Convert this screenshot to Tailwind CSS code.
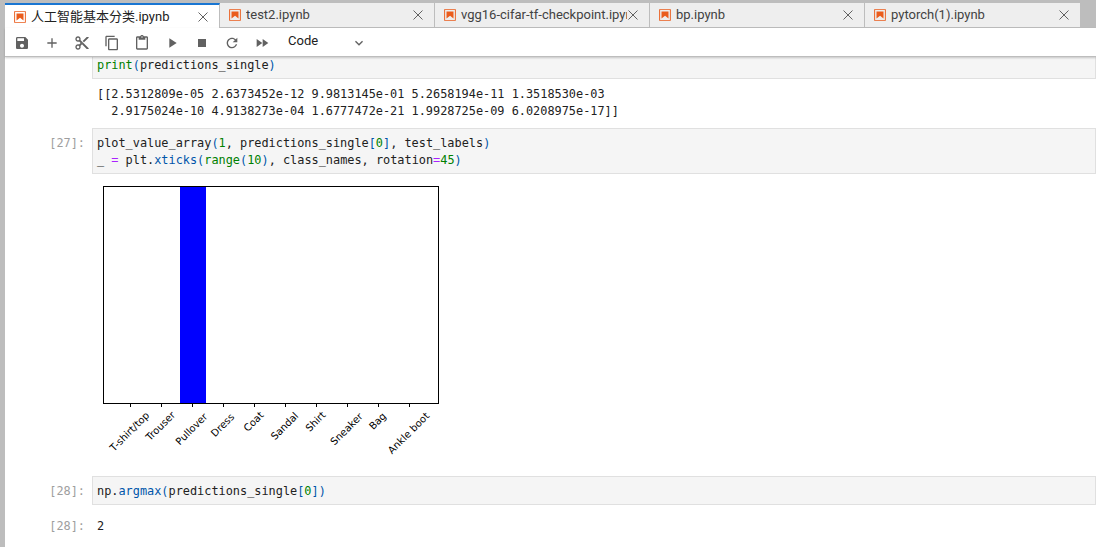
<!DOCTYPE html>
<html lang="zh">
<head>
    <meta charset="UTF-8">
    <title>人工智能基本分类.ipynb</title>
    <script src="https://cdn.jsdelivr.net/npm/@tailwindcss/browser@4"></script>
</head>
<body class="bg-white w-[1096px] h-[547px] overflow-hidden font-['Roboto','Noto_Sans_CJK_SC',sans-serif] text-[#424242]">
<div class="flex h-[547px]">
    <div class="w-[5px] bg-[#bdbdbd] shrink-0"></div>
    <div class="flex-1 flex flex-col min-w-0">

        <!-- tabs -->
        <div class="bg-[#bdbdbd] pt-[3px] shrink-0">
            <div class="flex h-[25px]">
                <div class="w-[215px] flex items-center pl-[8px] pr-[10px] bg-white border-t-2 border-[#1976d2] border-r border-r-[#bdbdbd] text-[#212121] text-[13px]">
                    <svg class="w-[14px] h-[14px] shrink-0 mr-[4px]" viewBox="0 0 22 22"><path fill="#ea5c1c" d="M18.7 3.3v15.4H3.3V3.3h15.4m1.5-1.5H1.8v18.3h18.3l.1-18.3z"/><path fill="#ea5c1c" d="M16.5 16.5l-5.4-4.3-5.6 4.3v-11h11z"/></svg>
                    <span class="flex-1 whitespace-nowrap overflow-hidden">人工智能基本分类.ipynb</span>
                    <svg class="w-3 h-3 shrink-0" viewBox="0 0 12 12" fill="none" stroke="#616161"><path d="M1.5 1.5l9 9M10.5 1.5l-9 9"/></svg>
                </div>
                <div class="w-[215px] flex items-center pl-[8px] pr-[10px] bg-[#eeeeee] border-b border-r border-[#bdbdbd] text-[13px]">
                    <svg class="w-[14px] h-[14px] shrink-0 mr-[4px]" viewBox="0 0 22 22"><path fill="#ea5c1c" d="M18.7 3.3v15.4H3.3V3.3h15.4m1.5-1.5H1.8v18.3h18.3l.1-18.3z"/><path fill="#ea5c1c" d="M16.5 16.5l-5.4-4.3-5.6 4.3v-11h11z"/></svg>
                    <span class="flex-1 whitespace-nowrap overflow-hidden">test2.ipynb</span>
                    <svg class="w-3 h-3 shrink-0" viewBox="0 0 12 12" fill="none" stroke="#616161"><path d="M1.5 1.5l9 9M10.5 1.5l-9 9"/></svg>
                </div>
                <div class="w-[215px] flex items-center pl-[8px] pr-[10px] bg-[#eeeeee] border-b border-r border-[#bdbdbd] text-[13px]">
                    <svg class="w-[14px] h-[14px] shrink-0 mr-[4px]" viewBox="0 0 22 22"><path fill="#ea5c1c" d="M18.7 3.3v15.4H3.3V3.3h15.4m1.5-1.5H1.8v18.3h18.3l.1-18.3z"/><path fill="#ea5c1c" d="M16.5 16.5l-5.4-4.3-5.6 4.3v-11h11z"/></svg>
                    <span class="flex-1 whitespace-nowrap overflow-hidden">vgg16-cifar-tf-checkpoint.ipynb</span>
                    <svg class="w-3 h-3 shrink-0" viewBox="0 0 12 12" fill="none" stroke="#616161"><path d="M1.5 1.5l9 9M10.5 1.5l-9 9"/></svg>
                </div>
                <div class="w-[215px] flex items-center pl-[8px] pr-[10px] bg-[#eeeeee] border-b border-r border-[#bdbdbd] text-[13px]">
                    <svg class="w-[14px] h-[14px] shrink-0 mr-[4px]" viewBox="0 0 22 22"><path fill="#ea5c1c" d="M18.7 3.3v15.4H3.3V3.3h15.4m1.5-1.5H1.8v18.3h18.3l.1-18.3z"/><path fill="#ea5c1c" d="M16.5 16.5l-5.4-4.3-5.6 4.3v-11h11z"/></svg>
                    <span class="flex-1 whitespace-nowrap overflow-hidden">bp.ipynb</span>
                    <svg class="w-3 h-3 shrink-0" viewBox="0 0 12 12" fill="none" stroke="#616161"><path d="M1.5 1.5l9 9M10.5 1.5l-9 9"/></svg>
                </div>
                <div class="w-[215px] flex items-center pl-[8px] pr-[10px] bg-[#eeeeee] border-b border-[#bdbdbd] text-[13px]">
                    <svg class="w-[14px] h-[14px] shrink-0 mr-[4px]" viewBox="0 0 22 22"><path fill="#ea5c1c" d="M18.7 3.3v15.4H3.3V3.3h15.4m1.5-1.5H1.8v18.3h18.3l.1-18.3z"/><path fill="#ea5c1c" d="M16.5 16.5l-5.4-4.3-5.6 4.3v-11h11z"/></svg>
                    <span class="flex-1 whitespace-nowrap overflow-hidden">pytorch(1).ipynb</span>
                    <svg class="w-3 h-3 shrink-0" viewBox="0 0 12 12" fill="none" stroke="#616161"><path d="M1.5 1.5l9 9M10.5 1.5l-9 9"/></svg>
                </div>
                <div class="flex-1 border-b border-[#bdbdbd]"></div>
            </div>
        </div>

        <!-- toolbar -->
        <div class="h-[29px] shrink-0 flex items-center pl-[2px] pt-[1px] border-b border-[#bdbdbd] shadow-[0_1px_2px_rgba(0,0,0,0.2)] relative z-10 bg-white">
            <button class="w-[30px] flex justify-center"><svg class="w-4 h-4" viewBox="0 0 24 24" fill="#616161"><path d="M17 3H5c-1.11 0-2 .9-2 2v14c0 1.1.89 2 2 2h14c1.1 0 2-.9 2-2V7l-4-4zm-5 16c-1.66 0-3-1.34-3-3s1.34-3 3-3 3 1.34 3 3-1.34 3-3 3zm3-10H5V5h10v4z"/></svg></button>
            <button class="w-[30px] flex justify-center"><svg class="w-4 h-4" viewBox="0 0 24 24" fill="#616161"><path d="M19 13h-6v6h-2v-6H5v-2h6V5h2v6h6v2z"/></svg></button>
            <button class="w-[30px] flex justify-center"><svg class="w-4 h-4" viewBox="0 0 24 24" fill="#616161"><path d="M9.64 7.64c.23-.5.36-1.05.36-1.64 0-2.21-1.79-4-4-4S2 3.79 2 6s1.79 4 4 4c.59 0 1.14-.13 1.64-.36L10 12l-2.36 2.36C7.14 14.13 6.59 14 6 14c-2.21 0-4 1.79-4 4s1.79 4 4 4 4-1.79 4-4c0-.59-.13-1.14-.36-1.64L12 14l7 7h3v-1L9.64 7.64zM6 8c-1.1 0-2-.89-2-2s.9-2 2-2 2 .89 2 2-.9 2-2 2zm0 12c-1.1 0-2-.89-2-2s.9-2 2-2 2 .89 2 2-.9 2-2 2zm6-7.5c-.28 0-.5-.22-.5-.5s.22-.5.5-.5.5.22.5.5-.22.5-.5.5zM19 3l-6 6 2 2 7-7V3z"/></svg></button>
            <button class="w-[30px] flex justify-center"><svg class="w-4 h-4" viewBox="0 0 24 24" fill="#616161"><path d="M16 1H4c-1.1 0-2 .9-2 2v14h2V3h12V1zm3 4H8c-1.1 0-2 .9-2 2v14c0 1.1.9 2 2 2h11c1.1 0 2-.9 2-2V7c0-1.1-.9-2-2-2zm0 16H8V7h11v14z"/></svg></button>
            <button class="w-[30px] flex justify-center"><svg class="w-4 h-4" viewBox="0 0 24 24" fill="#616161"><path d="M19 2h-4.18C14.4.84 13.3 0 12 0c-1.3 0-2.4.84-2.82 2H5c-1.1 0-2 .9-2 2v16c0 1.1.9 2 2 2h14c1.1 0 2-.9 2-2V4c0-1.1-.9-2-2-2zm-7 0c.55 0 1 .45 1 1s-.45 1-1 1-1-.45-1-1 .45-1 1-1zm7 18H5V4h2v3h10V4h2v16z"/></svg></button>
            <button class="w-[30px] flex justify-center"><svg class="w-4 h-4" viewBox="0 0 24 24" fill="#616161"><path d="M8 5v14l11-7z"/></svg></button>
            <button class="w-[30px] flex justify-center"><svg class="w-4 h-4" viewBox="0 0 24 24" fill="#616161"><path d="M6 6h12v12H6z"/></svg></button>
            <button class="w-[30px] flex justify-center"><svg class="w-4 h-4" viewBox="0 0 24 24" fill="#616161"><path d="M17.65 6.35C16.2 4.9 14.21 4 12 4c-4.42 0-7.99 3.58-7.99 8s3.57 8 7.99 8c3.73 0 6.84-2.55 7.73-6h-2.08c-.82 2.33-3.04 4-5.65 4-3.31 0-6-2.69-6-6s2.69-6 6-6c1.66 0 3.14.69 4.22 1.78L13 11h7V4l-2.35 2.35z"/></svg></button>
            <button class="w-[30px] flex justify-center"><svg class="w-4 h-4" viewBox="0 0 24 24" fill="#616161"><path d="M4 18l8.5-6L4 6v12zm9-12v12l8.5-6L13 6z"/></svg></button>
            <div class="flex items-center w-[79px] ml-[11px] justify-between text-[13px] text-[#212121]">
                <span class="-mt-[3px]">Code</span>
                <svg class="w-4 h-4" viewBox="0 0 24 24" fill="#616161"><path d="M7.41 8.59 12 13.17l4.59-4.58L18 10l-6 6-6-6z"/></svg>
            </div>
        </div>

        <!-- notebook -->
        <div class="flex-1 overflow-hidden font-['DejaVu_Sans_Mono',monospace] text-[11.88px] leading-[17px] text-[#212121]">
            <div class="ml-[87px] h-[22px] bg-[#f5f5f5] border border-t-0 border-[#e0e0e0] pl-[4px]">
                <span class="text-[#008000]">print</span><span class="text-[#0055aa]">(</span>predictions_single<span class="text-[#0055aa]">)</span>
            </div>

            <div class="ml-[87px] pl-[5px] pt-[7px] h-[49px] whitespace-pre">[[2.5312809e-05 2.6373452e-12 9.9813145e-01 5.2658194e-11 1.3518530e-03
  2.9175024e-10 4.9138273e-04 1.6777472e-21 1.9928725e-09 6.0208975e-17]]</div>

            <div class="flex">
                <div class="w-[87px] pr-[7px] pt-[7px] text-right text-[#9e9e9e]">[27]:</div>
                <div class="flex-1 h-[46px] bg-[#f5f5f5] border border-[#e0e0e0] pl-[4px] pt-[6px] whitespace-pre">plot_value_array<span class="text-[#0055aa]">(</span><span class="text-[#008000]">1</span>, predictions_single<span class="text-[#0055aa]">[</span><span class="text-[#008000]">0</span><span class="text-[#0055aa]">]</span>, test_labels<span class="text-[#0055aa]">)</span>
_ <span class="text-[#aa22ff]">=</span> plt.<span class="text-[#0055aa]">xticks(</span><span class="text-[#008000]">range</span><span class="text-[#0055aa]">(</span><span class="text-[#008000]">10</span><span class="text-[#0055aa]">)</span>, class_names, rotation<span class="text-[#aa22ff]">=</span><span class="text-[#008000]">45</span><span class="text-[#0055aa]">)</span></div>
            </div>

            <!-- matplotlib figure -->
            <div class="ml-[98px] pt-[12px] h-[302px]">
                <svg width="345" height="290" viewBox="0 0 345 290" class="block" style="font-family:'DejaVu Sans',sans-serif">
                    <rect x="77" y="0.5" width="26" height="217" fill="#0000ff"/>
                    <rect x="0.5" y="0.5" width="335" height="217" fill="none" stroke="#000" stroke-width="1"/>
                    <path stroke="#000" d="M27.5 218v3M58.5 218v3M89.5 218v3M120.5 218v3M151.5 218v3M182.5 218v3M213.5 218v3M244.5 218v3M275.5 218v3M306.5 218v3"/>
                    <g font-size="10" fill="#000" text-anchor="middle" dominant-baseline="central">
                        <text transform="translate(26.5 245.5) rotate(-45)">T-shirt/top</text>
                        <text transform="translate(57.5 240) rotate(-45)">Trouser</text>
                        <text transform="translate(88.5 243) rotate(-45)">Pullover</text>
                        <text transform="translate(119.5 239) rotate(-45)">Dress</text>
                        <text transform="translate(150.5 235.5) rotate(-45)">Coat</text>
                        <text transform="translate(181.5 240) rotate(-45)">Sandal</text>
                        <text transform="translate(212.5 235.5) rotate(-45)">Shirt</text>
                        <text transform="translate(243.5 243) rotate(-45)">Sneaker</text>
                        <text transform="translate(274.5 235) rotate(-45)">Bag</text>
                        <text transform="translate(305.5 247) rotate(-45)">Ankle boot</text>
                    </g>
                </svg>
            </div>

            <div class="flex">
                <div class="w-[87px] pr-[7px] pt-[7px] text-right text-[#9e9e9e]">[28]:</div>
                <div class="flex-1 h-[29px] bg-[#f5f5f5] border border-[#e0e0e0] pl-[4px] pt-[6px]">np.<span class="text-[#0055aa]">argmax(</span>predictions_single<span class="text-[#0055aa]">[</span><span class="text-[#008000]">0</span><span class="text-[#0055aa]">])</span></div>
            </div>

            <div class="flex pt-[13px]">
                <div class="w-[87px] pr-[7px] text-right text-[#9e9e9e]">[28]:</div>
                <div class="pl-[5px]">2</div>
            </div>
        </div>
    </div>
</div>
</body>
</html>
